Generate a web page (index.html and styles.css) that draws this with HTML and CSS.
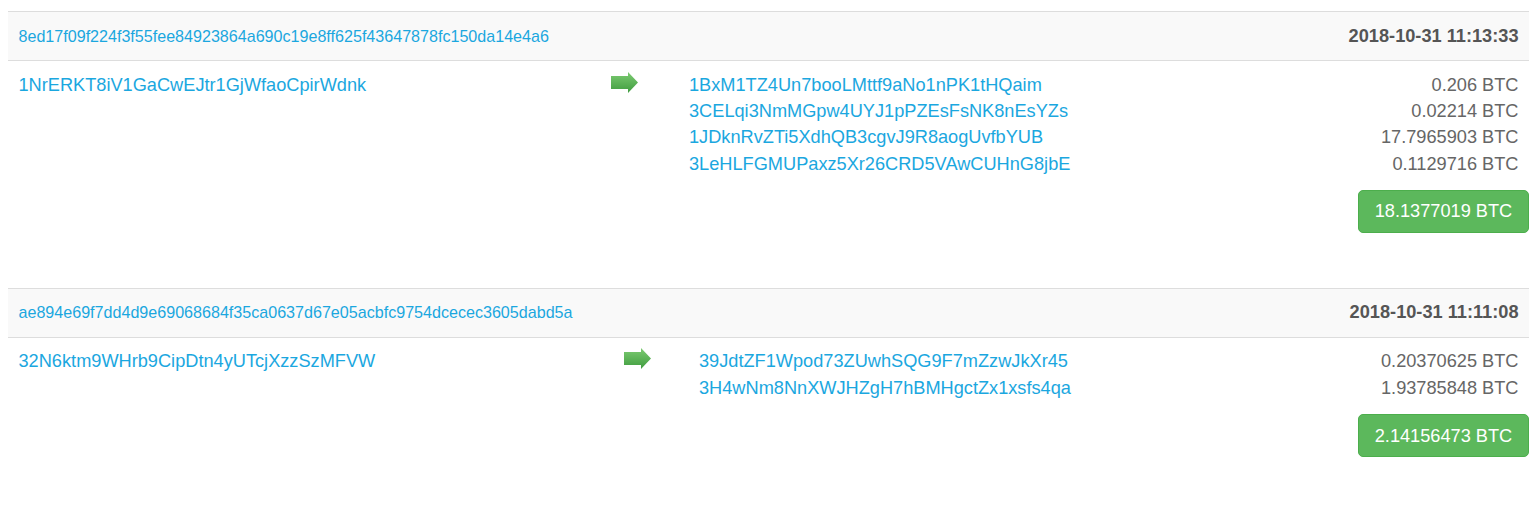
FILE: index.html
```html
<!DOCTYPE html>
<html>
<head>
<meta charset="utf-8">
<link rel="stylesheet" href="styles.css">
</head>
<body>
<div class="txs">
  <div class="tx">
    <table class="tx-table cols-a">
      <colgroup><col class="col-in"><col class="col-arrow"><col class="col-out"></colgroup>
      <tr class="tx-head">
        <th colspan="3"><a class="hash" href="#">8ed17f09f224f3f55fee84923864a690c19e8ff625f43647878fc150da14e4a6</a><span class="time">2018-10-31 11:13:33</span></th>
      </tr>
      <tr class="tx-body">
        <td class="inputs"><a class="addr" href="#">1NrERKT8iV1GaCwEJtr1GjWfaoCpirWdnk</a></td>
        <td class="arrow-cell"><svg class="arrow" width="27" height="21" viewBox="0 0 27 21"><defs><linearGradient id="ga" x1="0" y1="0" x2="0" y2="1"><stop offset="0" stop-color="#7dcb72"/><stop offset="1" stop-color="#3f9c3f"/></linearGradient></defs><polygon points="0,4 17,4 17,0 27,10.5 17,21 17,17 0,17" fill="url(#ga)"/></svg></td>
        <td class="outputs">
          <div class="out"><a class="addr" href="#">1BxM1TZ4Un7booLMttf9aNo1nPK1tHQaim</a><span class="amt">0.206 BTC</span></div>
          <div class="out"><a class="addr" href="#">3CELqi3NmMGpw4UYJ1pPZEsFsNK8nEsYZs</a><span class="amt">0.02214 BTC</span></div>
          <div class="out"><a class="addr" href="#">1JDknRvZTi5XdhQB3cgvJ9R8aogUvfbYUB</a><span class="amt">17.7965903 BTC</span></div>
          <div class="out"><a class="addr" href="#">3LeHLFGMUPaxz5Xr26CRD5VAwCUHnG8jbE</a><span class="amt">0.1129716 BTC</span></div>
        </td>
      </tr>
    </table>
    <div class="tx-foot"><button class="total">18.1377019 BTC</button></div>
  </div>
  <div class="tx">
    <table class="tx-table cols-b">
      <colgroup><col class="col-in"><col class="col-arrow"><col class="col-out"></colgroup>
      <tr class="tx-head">
        <th colspan="3"><a class="hash" href="#">ae894e69f7dd4d9e69068684f35ca0637d67e05acbfc9754dcecec3605dabd5a</a><span class="time">2018-10-31 11:11:08</span></th>
      </tr>
      <tr class="tx-body">
        <td class="inputs"><a class="addr" href="#">32N6ktm9WHrb9CipDtn4yUTcjXzzSzMFVW</a></td>
        <td class="arrow-cell"><svg class="arrow" width="27" height="21" viewBox="0 0 27 21"><defs><linearGradient id="gb" x1="0" y1="0" x2="0" y2="1"><stop offset="0" stop-color="#7dcb72"/><stop offset="1" stop-color="#3f9c3f"/></linearGradient></defs><polygon points="0,4 17,4 17,0 27,10.5 17,21 17,17 0,17" fill="url(#gb)"/></svg></td>
        <td class="outputs">
          <div class="out"><a class="addr" href="#">39JdtZF1Wpod73ZUwhSQG9F7mZzwJkXr45</a><span class="amt">0.20370625 BTC</span></div>
          <div class="out"><a class="addr" href="#">3H4wNm8NnXWJHZgH7hBMHgctZx1xsfs4qa</a><span class="amt">1.93785848 BTC</span></div>
        </td>
      </tr>
    </table>
    <div class="tx-foot"><button class="total">2.14156473 BTC</button></div>
  </div>
</div>
</body>
</html>
```
FILE: styles.css
```css
html, body {
  background: #fff;
}
body {
  margin: 8px;
  font-family: "Liberation Sans", Arial, Helvetica, sans-serif;
  font-size: 18.2px;
  line-height: 26.25px;
  color: #333;
}
.txs {
  padding-top: 3px;
}
.tx-table {
  width: 100%;
  table-layout: fixed;
  border-collapse: collapse;
  border-spacing: 0;
}
.cols-a .col-in { width: 562.5px; }
.cols-a .col-arrow { width: 108px; }
.cols-b .col-in { width: 577.5px; }
.cols-b .col-arrow { width: 103px; }
.tx-table th,
.tx-table td {
  border-top: 1px solid #ddd;
  padding: 10.5px;
  vertical-align: top;
  white-space: nowrap;
}
.tx-head th {
  background: #f9f9f9;
  text-align: left;
  font-weight: normal;
  font-size: 16px;
}
a {
  color: #1ba7df;
  text-decoration: none;
}
.hash {
  font-size: 16.1px;
}
.time {
  float: right;
  font-size: 18.2px;
  font-weight: bold;
  color: #555;
}
.addr {
  font-size: 18.2px;
}
.arrow-cell {
  padding: 15px 0 0;
}
.arrow {
  display: block;
  margin: 0 auto;
}
.out::after {
  content: "";
  display: block;
  clear: both;
}
.amt {
  float: right;
  color: #666;
}
.tx-foot {
  text-align: right;
  padding-top: 2.5px;
  padding-bottom: 54.5px;
}
.total {
  font-family: "Liberation Sans", Arial, Helvetica, sans-serif;
  font-size: 18.2px;
  line-height: 26.25px;
  color: #fff;
  background: #5cb85c;
  border: 1px solid #4cae4c;
  border-radius: 5px;
  padding: 7.6px 15.75px;
  margin: 0;
}
```
